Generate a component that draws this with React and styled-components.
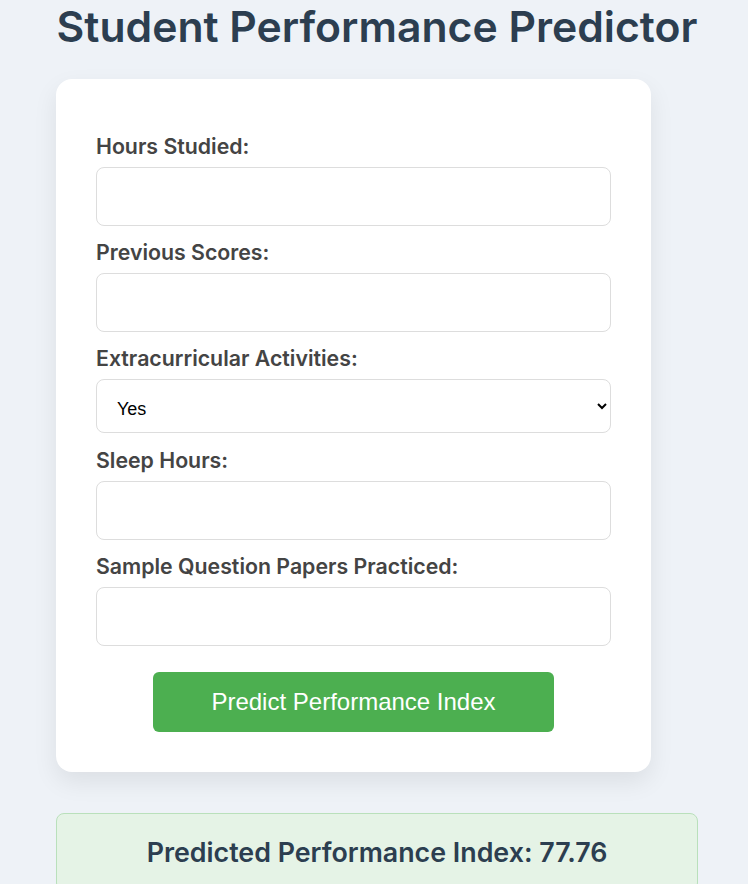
import React from "react";
import styled, { createGlobalStyle } from "styled-components";

const GlobalStyle = createGlobalStyle`
  body {
    margin: 0;
    background: #eef2f7;
    font-family: Inter, "Noto Sans", sans-serif;
  }
`;

const Page = styled.div`
  width: 642px;
  margin-left: 56px;
  padding-top: 2px;
`;

const Title = styled.h1`
  margin: 0 0 27px;
  font-size: 42.7px;
  line-height: 50px;
  font-weight: 600;
  color: #2c3e50;
  text-align: center;
  white-space: nowrap;
`;

const Card = styled.form`
  width: 595px;
  box-sizing: border-box;
  padding: 41px 40px 40px;
  background: #fff;
  border-radius: 16px;
  box-shadow: 0 10px 25px rgba(0, 0, 0, 0.08);
  display: flex;
  flex-direction: column;
`;

const Label = styled.label`
  display: block;
  margin: 14px 0 8px;
  font-size: 21.3px;
  line-height: 25px;
  font-weight: 600;
  color: #444;
`;

const Input = styled.input`
  display: block;
  width: 100%;
  height: 59px;
  box-sizing: border-box;
  border: 1px solid #ddd;
  border-radius: 8px;
  padding: 0 16px;
  font-size: 18px;
  background: #fff;
`;

const Select = styled.select`
  display: block;
  width: 100%;
  height: 54px;
  box-sizing: border-box;
  border: 1px solid #ddd;
  border-radius: 8px;
  padding: 6px 22px 0 16px;
  margin-bottom: 1px;
  font-family: "Liberation Sans", Arial, sans-serif;
  font-size: 18px;
  color: #000;
  background: #fff;
`;

const Button = styled.button`
  align-self: center;
  width: 401px;
  height: 60px;
  margin-top: 26px;
  border: none;
  border-radius: 6px;
  background: #4caf50;
  color: #fff;
  font-family: "Liberation Sans", Arial, sans-serif;
  font-size: 24px;
  cursor: pointer;
`;

const Result = styled.div`
  margin-top: 41px;
  padding: 22px 20px;
  background: #e5f3e6;
  border: 1px solid #b9e0bb;
  border-radius: 8px;
  text-align: center;
  font-size: 26.8px;
  line-height: 32px;
  font-weight: 600;
  color: #2c3e50;
`;

const fields = [
  { label: "Hours Studied:" },
  { label: "Previous Scores:" },
  { label: "Extracurricular Activities:", select: true },
  { label: "Sleep Hours:" },
  { label: "Sample Question Papers Practiced:" },
];

export default function App() {
  return (
    <>
      <GlobalStyle />
      <Page>
        <Title>Student Performance Predictor</Title>
        <Card onSubmit={(e) => e.preventDefault()}>
          {fields.map((f) => (
            <div key={f.label}>
              <Label>{f.label}</Label>
              {f.select ? (
                <Select defaultValue="Yes">
                  <option>Yes</option>
                  <option>No</option>
                </Select>
              ) : (
                <Input type="number" />
              )}
            </div>
          ))}
          <Button type="submit">Predict Performance Index</Button>
        </Card>
        <Result>Predicted Performance Index: 77.76</Result>
      </Page>
    </>
  );
}
